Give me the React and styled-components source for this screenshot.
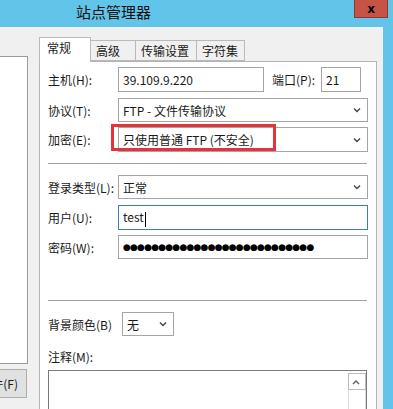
import React from 'react';
import styled, { createGlobalStyle } from 'styled-components';

const GlobalStyle = createGlobalStyle`
  html, body {
    margin: 0;
    padding: 0;
    background: #62c4e8;
  }
  body {
    font-family: "Noto Sans CJK SC", "Liberation Sans", sans-serif;
    font-size: 12px;
    color: #1a1a1a;
  }
`;

const Frame = styled.div`
  width: 393px;
  height: 409px;
  display: flex;
  flex-direction: column;
  background: #62c4e8;
  overflow: hidden;
`;

const TitleBar = styled.div`
  height: 27px;
  flex-shrink: 0;
  display: flex;
  align-items: flex-start;
  justify-content: space-between;
`;

const Title = styled.div`
  margin-left: 76px;
  margin-top: 2px;
  font-size: 15px;
  line-height: 20px;
  color: #111;
`;

const CloseButton = styled.div`
  width: 32px;
  height: 17px;
  margin-right: 5px;
  background: #c75347;
  border: 1px solid #8a3a33;
  border-top: none;
  display: flex;
  align-items: center;
  justify-content: center;
  font-family: "DejaVu Sans", sans-serif;
  font-weight: bold;
  font-size: 12px;
  line-height: 1;
  color: #000;
`;

const Body = styled.div`
  flex: 1;
  margin-right: 10px;
  background: #f0f0f0;
  display: flex;
  overflow: hidden;
`;

const LeftColumn = styled.div`
  width: 28px;
  flex-shrink: 0;
  display: flex;
  flex-direction: column;
`;

const SiteList = styled.div`
  margin-top: 29px;
  height: 306px;
  background: #fff;
  border: 1px solid #9a9a9a;
  border-left: none;
`;

const SideButton = styled.div`
  margin-top: 5px;
  height: 29px;
  width: 27px;
  background: #e1e1e1;
  border: 1px solid #adadad;
  border-left: none;
  display: flex;
  align-items: center;
  justify-content: flex-end;
  padding-right: 8px;
  box-sizing: border-box;
  overflow: hidden;
  white-space: nowrap;
`;

const TabArea = styled.div`
  margin-left: 11px;
  padding-top: 10px;
  width: 338px;
  display: flex;
  flex-direction: column;
`;

const TabRow = styled.div`
  display: flex;
  align-items: flex-end;
  height: 24px;
  position: relative;
  z-index: 1;
`;

const Tab = styled.div`
  width: ${p => p.$w}px;
  height: ${p => (p.$active ? 25 : 21)}px;
  box-sizing: border-box;
  padding-left: ${p => (p.$active ? 7 : 5)}px;
  background: ${p => (p.$active ? '#fff' : '#f0f0f0')};
  border: 1px solid #b9b9b9;
  border-bottom: ${p => (p.$active ? 'none' : '1px solid #b9b9b9')};
  border-left: ${p => (p.$first ? '1px solid #b9b9b9' : 'none')};
  border-right: 1px solid #b9b9b9;
  line-height: ${p => (p.$active ? 20 : 19)}px;
  margin-bottom: ${p => (p.$active ? -1 : 0)}px;
`;

const Panel = styled.div`
  flex: 1;
  background: #fff;
  border: 1px solid #b4b4b4;
  border-bottom: none;
  padding: 0 8px 0 8px;
  display: flex;
  flex-direction: column;
`;

const Row = styled.div`
  display: flex;
  align-items: center;
  height: ${p => p.$h || 24}px;
  margin-top: ${p => p.$mt}px;
  position: relative;
  flex-shrink: 0;
`;

const Label = styled.div`
  width: ${p => p.$w || 70}px;
  margin-left: ${p => p.$ml || 0}px;
  flex-shrink: 0;
  white-space: nowrap;
`;

const Field = styled.div`
  width: ${p => p.$w}px;
  flex: ${p => (p.$w ? '0 0 auto' : '1')};
  height: 100%;
  box-sizing: border-box;
  background: #fff;
  border: 1px solid ${p => (p.$focus ? '#3c7fb1' : '#a5a5a5')};
  display: flex;
  align-items: center;
  padding: 0 4px;
  white-space: nowrap;
  position: relative;
`;

const Value = styled.span`
  flex: 1;
`;

const Chevron = styled.svg`
  width: 8px;
  height: 6px;
  margin-right: 2px;
  flex-shrink: 0;
`;

const Separator = styled.div`
  height: 1px;
  margin-top: ${p => p.$mt}px;
  margin-right: 1px;
  background: #a0a0a0;
  flex-shrink: 0;
`;

const Highlight = styled.div`
  position: absolute;
  left: 63px;
  top: -3px;
  width: 165px;
  height: 27px;
  box-sizing: border-box;
  border: 3px solid #e2343b;
  pointer-events: none;
`;

const Caret = styled.span`
  display: inline-block;
  width: 1px;
  height: 15px;
  background: #000;
  vertical-align: middle;
  margin-left: 1px;
`;

const Dots = styled.span`
  font-family: "DejaVu Sans", sans-serif;
  font-size: 9px;
  letter-spacing: -0.8px;
  color: #000;
`;

const Notes = styled.div`
  margin-top: 6px;
  flex: 1;
  border: 1px solid #7a7a7a;
  border-bottom: none;
  margin-right: 1px;
  background: #fff;
  display: flex;
  justify-content: flex-end;
`;

const ScrollBar = styled.div`
  width: 16px;
  margin: 2px 0 0 0;
  border-left: 1px solid #dcdcdc;
  border-right: 1px solid #dcdcdc;
  display: flex;
  flex-direction: column;
`;

const ScrollArrow = styled.div`
  height: 15px;
  border: 1px solid #bcbcbc;
  margin: 0 -1px;
  display: flex;
  align-items: center;
  justify-content: center;
  background: #fff;
`;

const Arrow = ({ up }) => (
  <Chevron viewBox="0 0 8 6">
    <polyline
      points={up ? '1,5 4,2 7,5' : '1,1.5 4,4.5 7,1.5'}
      fill="none"
      stroke={up ? '#606060' : '#444'}
      strokeWidth="1.4"
    />
  </Chevron>
);

const tabs = [
  { label: '常规', w: 52, active: true },
  { label: '高级', w: 45 },
  { label: '传输设置', w: 61 },
  { label: '字符集', w: 48 },
];

const App = () => {
  return (
    <>
      <GlobalStyle />
      <Frame>
        <TitleBar>
          <Title>站点管理器</Title>
          <CloseButton>x</CloseButton>
        </TitleBar>
        <Body>
          <LeftColumn>
            <SiteList />
            <SideButton>件(F)</SideButton>
          </LeftColumn>
          <TabArea>
            <TabRow>
              {tabs.map((t, i) => (
                <Tab key={t.label} $w={t.w} $active={t.active} $first={i === 0}>
                  {t.label}
                </Tab>
              ))}
            </TabRow>
            <Panel>
              <Row $mt={5} $h={25}>
                <Label>主机(H):</Label>
                <Field $w={146}>39.109.9.220</Field>
                <Label $w={49} $ml={8}>端口(P):</Label>
                <Field $w={40}>21</Field>
              </Row>
              <Row $mt={6}>
                <Label>协议(T):</Label>
                <Field>
                  <Value>FTP - 文件传输协议</Value>
                  <Arrow />
                </Field>
              </Row>
              <Row $mt={5} $h={25}>
                <Label>加密(E):</Label>
                <Field>
                  <Value>只使用普通 FTP (不安全)</Value>
                  <Arrow />
                </Field>
                <Highlight />
              </Row>
              <Separator $mt={11} />
              <Row $mt={11}>
                <Label>登录类型(L):</Label>
                <Field>
                  <Value>正常</Value>
                  <Arrow />
                </Field>
              </Row>
              <Row $mt={6} $h={25}>
                <Label>用户(U):</Label>
                <Field $focus>
                  <Value>test<Caret /></Value>
                </Field>
              </Row>
              <Row $mt={5}>
                <Label>密码(W):</Label>
                <Field>
                  <Dots>{'●'.repeat(27)}</Dots>
                </Field>
              </Row>
              <Separator $mt={41} />
              <Row $mt={11}>
                <Label $w={74}>背景颜色(B)</Label>
                <Field $w={52}>
                  <Value>无</Value>
                  <Arrow />
                </Field>
              </Row>
              <Row $mt={12} $h={16}>
                <Label>注释(M):</Label>
              </Row>
              <Notes>
                <ScrollBar>
                  <ScrollArrow>
                    <Arrow up />
                  </ScrollArrow>
                </ScrollBar>
              </Notes>
            </Panel>
          </TabArea>
        </Body>
      </Frame>
    </>
  );
};

export default App;
